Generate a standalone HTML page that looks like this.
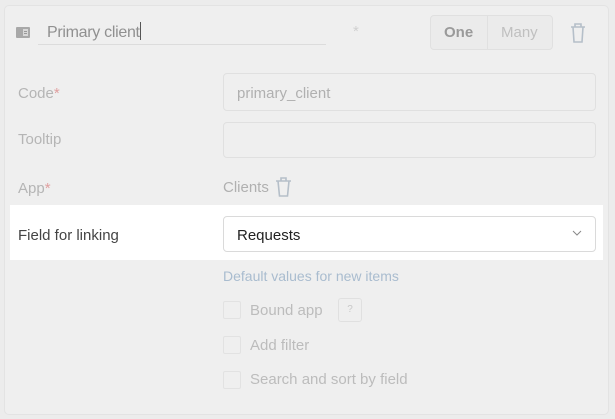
<!DOCTYPE html>
<html><head><style>
*{box-sizing:border-box;margin:0;padding:0}
body{width:615px;height:419px;background:#ececec;font-family:"Liberation Sans",sans-serif;font-size:15px;position:relative;overflow:hidden}
.a{position:absolute}
.card{left:4px;top:5px;width:605px;height:410px;background:#efefef;border:1px solid #e3e3e3;border-radius:5px}
.lbl{color:#b5b5b5;left:18px}
.inp{left:223px;width:373px;border:1px solid #e0e0e0;border-radius:4px;background:#efefef}
.red{color:#e0a0a0}
.cb{left:223px;width:18px;height:18px;border:1px solid #e2e2e2;border-radius:2px}
.ct{left:250px;color:#bcbcbc}
</style></head><body>
<div class="a card"></div>
<div class="a" style="left:16px;top:27px;width:14px;height:11px;background:#a8a8a8;border-radius:1px"></div>
<div class="a" style="left:23px;top:29px;width:5px;height:7px;background:#d8d8d8"></div>
<div class="a" style="left:24px;top:31px;width:3px;height:1px;background:#999"></div>
<div class="a" style="left:24px;top:33px;width:3px;height:1px;background:#999"></div>
<div class="a" style="left:47px;top:22px;color:#909090;font-size:16px;letter-spacing:-0.3px">Primary client<span style="display:inline-block;width:1px;height:18px;background:#555;vertical-align:-3px"></span></div>
<div class="a" style="left:38px;top:44px;width:288px;height:1px;background:#dcdcdc"></div>
<div class="a" style="left:353px;top:23px;color:#d0d0d0">*</div>
<div class="a" style="left:430px;top:15px;width:123px;height:35px;border:1px solid #e0e0e0;border-radius:4px;background:#ebebeb"></div>
<div class="a" style="left:487px;top:16px;width:1px;height:33px;background:#e0e0e0"></div>
<div class="a" style="left:444px;top:24px;color:#9a9a9a;font-weight:bold">One</div>
<div class="a" style="left:501px;top:24px;color:#c0c0c0">Many</div>
<svg class="a" style="left:569px;top:22px" width="18" height="22" viewBox="0 0 18 22" fill="none" stroke="#b5bfc9" stroke-width="1.6"><path d="M2 5h14M6 5V2h6v3M4 5l1 15h8l1-15"/></svg>
<div class="a lbl" style="top:85px">Code<span class="red">*</span></div>
<div class="a inp" style="top:73px;height:38px"></div>
<div class="a" style="left:237px;top:85px;color:#b0b0b0">primary_client</div>
<div class="a lbl" style="top:131px">Tooltip</div>
<div class="a inp" style="top:122px;height:36px"></div>
<div class="a lbl" style="top:180px">App<span class="red">*</span></div>
<div class="a" style="left:223px;top:179px;color:#b0b0b0">Clients</div>
<svg class="a" style="left:274px;top:176px" width="20" height="22" viewBox="0 0 20 22" fill="none" stroke="#b5bfc9" stroke-width="1.6"><path d="M2 5h15M7 5V2h5v3M4 5l1.5 15h8L15 5"/></svg>
<div class="a" style="left:10px;top:205px;width:593px;height:55px;background:#fff"></div>
<div class="a" style="left:18px;top:227px;color:#444">Field for linking</div>
<div class="a" style="left:223px;top:216px;width:373px;height:36px;border:1px solid #dadada;border-radius:4px;background:#fff"></div>
<div class="a" style="left:237px;top:227px;color:#222">Requests</div>
<svg class="a" style="left:572px;top:230px" width="10" height="7" viewBox="0 0 10 7" fill="none" stroke="#888" stroke-width="1"><path d="M1 1l4 4 4-4"/></svg>
<div class="a" style="left:223px;top:268px;color:#a9bccf;font-size:14px">Default values for new items</div>
<div class="a cb" style="top:301px"></div><div class="a ct" style="top:302px">Bound app</div>
<div class="a" style="left:338px;top:298px;width:24px;height:24px;border:1px solid #e0e0e0;border-radius:3px;color:#c8c8c8;font-size:10px;text-align:center;line-height:22px">?</div>
<div class="a cb" style="top:336px"></div><div class="a ct" style="top:337px">Add filter</div>
<div class="a cb" style="top:371px"></div><div class="a ct" style="top:371px">Search and sort by field</div>
</body></html>
